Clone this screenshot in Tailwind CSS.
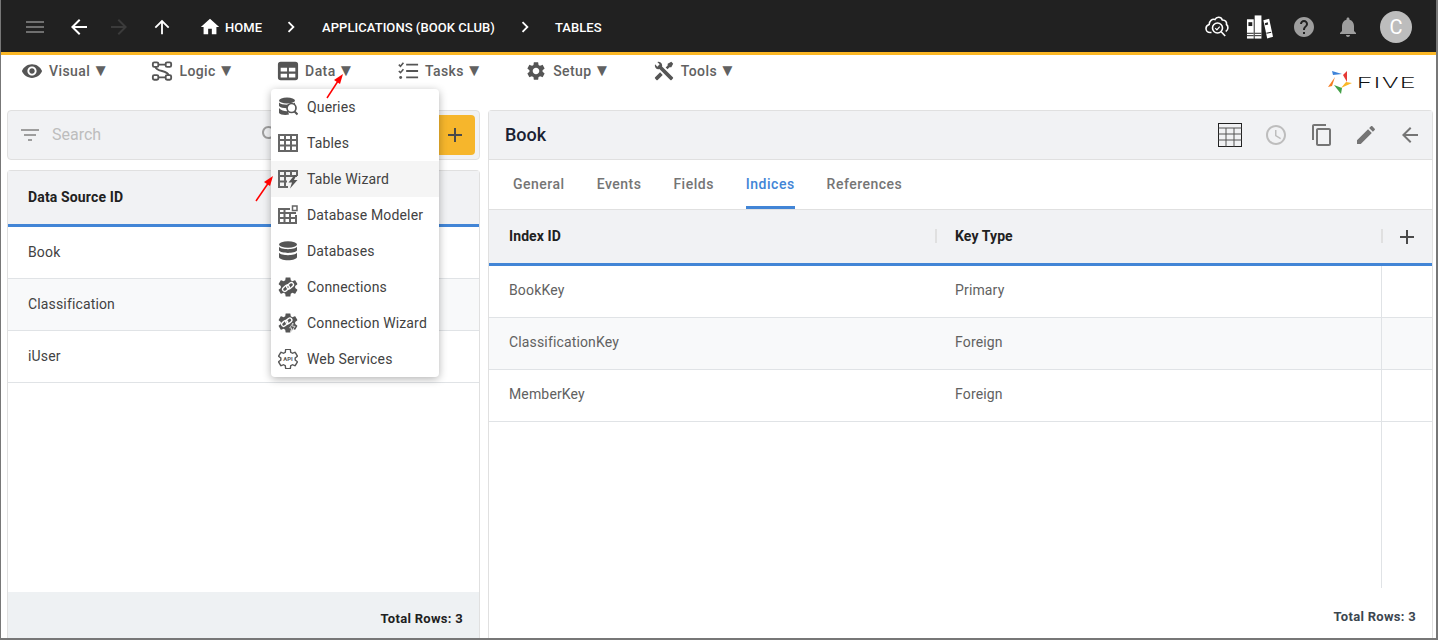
<!DOCTYPE html>
<html lang="en">
<head>
<meta charset="utf-8">
<title>Five - Tables</title>
<script src="https://cdn.jsdelivr.net/npm/@tailwindcss/browser@4"></script>
</head>
<body class="bg-white">
<div class="relative flex h-[640px] w-[1438px] flex-col overflow-hidden border-r-2 border-b-2 border-l border-[#777777] bg-white font-['Roboto',sans-serif]">

  <!-- top bar -->
  <header class="flex h-[55px] shrink-0 items-center border-b-[3px] border-[#fbb725] bg-[#212121] pt-[2px] pl-[22px] pr-[24px] text-[13px] font-medium tracking-[0.05px] text-white">
    <svg class="h-6 w-6 fill-[#6f6f6f]" viewBox="0 0 24 24"><path d="M3 18h18v-2H3v2zm0-5h18v-2H3v2zm0-7v2h18V6H3z"/></svg>
    <svg class="ml-[20px] h-6 w-6 fill-white" viewBox="0 0 24 24"><path d="M20 11H7.83l5.59-5.59L12 4l-8 8 8 8 1.41-1.41L7.83 13H20v-2z"/></svg>
    <svg class="ml-[16px] h-6 w-6 fill-[#3b3b3b]" viewBox="0 0 24 24"><path d="M12 4l-1.41 1.41L16.17 11H4v2h12.17l-5.58 5.59L12 20l8-8z"/></svg>
    <svg class="ml-[20px] h-[22px] w-[22px] fill-white" viewBox="0 0 24 24"><path d="M4 12l1.41 1.41L11 7.83V20h2V7.83l5.58 5.59L20 12l-8-8-8 8z"/></svg>
    <svg class="ml-[26px] h-[22px] w-[22px] fill-white" viewBox="0 0 24 24"><path d="M10 20v-6h4v6h5v-8h3L12 3 2 12h3v8z"/></svg>
    <span class="mt-[2px] ml-[4px]">HOME</span>
    <svg class="ml-[18px] h-[22px] w-[22px] fill-white" viewBox="0 0 24 24"><path d="M10 6L8.59 7.41 13.17 12l-4.58 4.59L10 18l6-6z"/></svg>
    <span class="mt-[2px] ml-[20px]">APPLICATIONS (BOOK CLUB)</span>
    <svg class="ml-[19px] h-[22px] w-[22px] fill-white" viewBox="0 0 24 24"><path d="M10 6L8.59 7.41 13.17 12l-4.58 4.59L10 18l6-6z"/></svg>
    <span class="mt-[2px] ml-[19px]">TABLES</span>
    <div class="ml-auto flex items-center">
      <svg class="h-6 w-6 fill-none stroke-white stroke-[1.6]" viewBox="0 0 24 24"><path d="M6.500 17.500H5C2.800 17.500 1 15.700 1 13.500c0-2 1.300-3.500 3.200-4C4.300 6 7 3.500 10 4.500c1.500-3 6-3 7.300 .5 3-.2 4.700 2.200 4.200 4.500 2 1.500 2 5.500-.8 7"/><circle cx="12.500" cy="13" r="5"/><path d="M16.200 16.800l4 4.200"/><path d="M10.300 13.200l1.600 1.600 2.800-3.200" stroke-width="1.200"/></svg>
      <svg class="ml-[17px] h-6 w-[27px]" viewBox="0 0 28 24"><g fill="#fff"><rect x="1" y="4" width="7" height="20"/><rect x="9" y="0" width="7" height="24"/><path d="M18 5l6-1.500 4 18.500-6 2z"/></g><g fill="#212121"><rect x="2.500" y="7" width="4" height="4"/><rect x="1" y="18" width="7" height="1"/><rect x="1" y="20.500" width="7" height="1"/><rect x="9" y="18" width="7" height="1"/><rect x="9" y="20.500" width="7" height="1"/><path d="M19.500 8l3-1 .5 2.500-3 .8z"/><path d="M21 18l5-1 .3 1-5 1z"/></g></svg>
      <svg class="ml-[19px] h-6 w-6 fill-[#9e9e9e]" viewBox="0 0 24 24"><path d="M12 2C6.48 2 2 6.48 2 12s4.48 10 10 10 10-4.48 10-10S17.52 2 12 2zm1 17h-2v-2h2v2zm2.070-7.750l-.9.920C13.450 12.900 13 13.500 13 15h-2v-.5c0-1.100.45-2.100 1.170-2.830l1.240-1.260c.37-.36.59-.86.59-1.410 0-1.100-.9-2-2-2s-2 .9-2 2H8c0-2.210 1.790-4 4-4s4 1.790 4 4c0 .88-.36 1.680-.93 2.250z"/></svg>
      <svg class="ml-[20px] h-6 w-6 fill-[#9e9e9e]" viewBox="0 0 24 24"><path d="M12 22c1.100 0 2-.9 2-2h-4c0 1.100.89 2 2 2zm6-6v-5c0-3.070-1.640-5.640-4.500-6.320V4c0-.83-.67-1.500-1.500-1.500s-1.500.67-1.500 1.500v.68C7.630 5.360 6 7.920 6 11v5l-2 2v1h16v-1l-2-2z"/></svg>
      <div class="ml-[20px] flex h-8 w-8 items-center justify-center rounded-full bg-[#bdbdbd] text-xl font-normal text-white">C</div>
    </div>
  </header>

  <!-- menu row -->
  <nav class="flex h-[55px] shrink-0 items-start justify-between pl-[20px] text-sm font-medium tracking-[0.4px] text-[#616161]">
    <div class="flex h-[31px] items-center gap-[42.500px]">
      <div class="flex items-center"><svg class="h-[22px] w-[22px] fill-[#555555]" viewBox="0 0 24 24"><path d="M12 4.500C7 4.500 2.730 7.610 1 12c1.730 4.390 6 7.500 11 7.500s9.270-3.110 11-7.500c-1.730-4.390-6-7.500-11-7.500zM12 17c-2.760 0-5-2.240-5-5s2.240-5 5-5 5 2.240 5 5-2.240 5-5 5zm0-8c-1.660 0-3 1.340-3 3s1.340 3 3 3 3-1.340 3-3-1.340-3-3-3z"/></svg><span class="ml-[6px]">Visual</span><span class="ml-[2px] text-[17px] leading-none tracking-normal">▼</span></div>
      <div class="flex items-center"><svg class="h-[22px] w-[22px] fill-none stroke-[#555555] stroke-2" viewBox="0 0 24 24"><rect x="2" y="2.500" width="6" height="5" rx="1.500"/><rect x="16" y="2.500" width="6" height="5" rx="1.500"/><rect x="2" y="16.500" width="6" height="5" rx="1.500"/><rect x="16" y="16.500" width="6" height="5" rx="1.500"/><path d="M8 5h8M5 7.500c0 5 14 4 14 9M8 19h8"/></svg><span class="ml-[6px]">Logic</span><span class="ml-[2px] text-[17px] leading-none tracking-normal">▼</span></div>
      <div class="flex items-center"><svg class="h-[22px] w-[22px] fill-[#555555]" viewBox="0 0 24 24"><path fill-rule="evenodd" d="M4 2h16a3 3 0 0 1 3 3v14a3 3 0 0 1-3 3H4a3 3 0 0 1-3-3V5a3 3 0 0 1 3-3zM4 8.500v4h7v-4H4zm9 0v4h7v-4h-7zm-9 6.500v4h7v-4H4zm9 0v4h7v-4h-7z"/></svg><span class="ml-[6px]">Data</span><span class="ml-[2px] text-[17px] leading-none tracking-normal">▼</span></div>
      <div class="flex items-center"><svg class="h-[22px] w-[22px] fill-none stroke-[#555555] stroke-2" viewBox="0 0 24 24"><path d="M10 5h13M10 12h13M10 19h13"/><path d="M2 5l1.800 1.800L7 3M2 12l1.800 1.800L7 10" stroke-width="1.700"/><circle cx="4" cy="19" r="1.600" fill="#555555" stroke="none"/></svg><span class="ml-[6px]">Tasks</span><span class="ml-[2px] text-[17px] leading-none tracking-normal">▼</span></div>
      <div class="flex items-center"><svg class="h-[22px] w-[22px] fill-[#555555]" viewBox="0 0 24 24"><path d="M19.140 12.940c.04-.3.06-.61.06-.94 0-.32-.02-.64-.07-.94l2.030-1.580c.18-.14.23-.41.12-.61l-1.920-3.320c-.12-.22-.37-.29-.59-.22l-2.390.96c-.5-.38-1.030-.7-1.620-.94l-.36-2.540c-.04-.24-.24-.41-.48-.41h-3.840c-.24 0-.43.17-.47.41l-.36 2.540c-.59.24-1.130.57-1.620.94l-2.390-.96c-.22-.08-.47 0-.59.22L2.740 8.870c-.12.21-.08.47.12.61l2.030 1.580c-.05.3-.09.63-.09.94s.02.64.07.94l-2.030 1.580c-.18.14-.23.41-.12.61l1.920 3.320c.12.22.37.29.59.22l2.390-.96c.5.38 1.030.7 1.620.94l.36 2.540c.05.24.24.41.48.41h3.840c.24 0 .44-.17.47-.41l.36-2.540c.59-.24 1.130-.56 1.620-.94l2.390.96c.22.08.47 0 .59-.22l1.920-3.320c.12-.22.07-.47-.12-.61l-2.010-1.580zM12 15.600c-1.980 0-3.600-1.620-3.600-3.600s1.620-3.600 3.600-3.600 3.600 1.620 3.600 3.600-1.620 3.600-3.600 3.600z"/></svg><span class="ml-[6px]">Setup</span><span class="ml-[2px] text-[17px] leading-none tracking-normal">▼</span></div>
      <div class="flex items-center"><svg class="h-[22px] w-[22px] fill-[#555555]" viewBox="0 0 24 24"><path d="M21.710 20.290L20.290 21.710A1 1 0 0 1 18.880 21.710L7 9.850A3.810 3.810 0 0 1 6 10A4 4 0 0 1 2.220 4.700L4.760 7.240L5.290 6.710L6.710 5.290L7.240 4.760L4.700 2.220A4 4 0 0 1 10 6A3.810 3.810 0 0 1 9.850 7L21.710 18.880A1 1 0 0 1 21.710 20.290M2.290 18.880A1 1 0 0 0 2.290 20.290L3.710 21.710A1 1 0 0 0 5.120 21.710L10.590 16.250L7.760 13.420M20 2L16 4V6L13.830 8.170L15.830 10.170L18 8H20L22 4Z"/></svg><span class="ml-[6px]">Tools</span><span class="ml-[2px] text-[17px] leading-none tracking-normal">▼</span></div>
    </div>
    <div class="mt-[16px] flex w-[108px] shrink-0 items-center">
      <svg class="h-6 w-6" viewBox="0 0 24 24"><path fill="#3f83d8" d="M4 0l10 3-9 1z"/><path fill="#e53935" d="M19 0l-4 4 4 7z"/><path fill="#fbb725" d="M24 12l-11 5 5-6z"/><path fill="#43a047" d="M13 23L6 14l8 3z"/><path fill="#f57c20" d="M0 16L7 6 4 15z"/></svg>
      <span class="ml-[5px] origin-left scale-x-[1.850] font-['Roboto',sans-serif] text-[14px] leading-none font-light tracking-[1px] text-[#111111]">FIVE</span>
    </div>
  </nav>

  <!-- main -->
  <main class="flex min-h-0 flex-1 gap-2 pl-[6px] pr-[3px]">
    <!-- left -->
    <section class="flex w-[473px] shrink-0 flex-col gap-[10px]">
      <div class="flex h-[50px] shrink-0 items-center rounded border border-[#e0e0e0] bg-[#f1f2f4] pl-[10px] pr-1">
        <svg class="h-6 w-6 fill-[#9e9e9e]" viewBox="0 0 24 24"><path d="M10 18h4v-2h-4v2zM3 6v2h18V6H3zm3 7h12v-2H6v2z"/></svg>
        <span class="ml-[10px] text-base text-[#bdbdbd]">Search</span>
        <svg class="ml-[158px] h-6 w-6 fill-[#9e9e9e]" viewBox="0 0 24 24"><path d="M15.500 14h-.79l-.28-.27C15.410 12.590 16 11.110 16 9.500 16 5.910 13.090 3 9.500 3S3 5.910 3 9.500 5.910 16 9.500 16c1.610 0 3.090-.59 4.230-1.570l.27.28v.79l5 4.990L20.490 19l-4.990-5zm-6 0C7.010 14 5 11.990 5 9.500S7.010 5 9.500 5 14 7.010 14 9.500 11.990 14 9.500 14z"/></svg>
        <div class="ml-auto flex h-10 w-10 items-center justify-center rounded bg-[#f6b62c]">
          <svg class="h-6 w-6 fill-[#4a4a4a]" viewBox="0 0 24 24"><path d="M19 13h-6v6h-2v-6H5v-2h6V5h2v6h6v2z"/></svg>
        </div>
      </div>
      <div class="flex min-h-0 flex-1 flex-col rounded-t border border-b-0 border-[#e0e0e0] text-sm tracking-[0.15px]">
        <div class="flex h-[56px] shrink-0 items-center border-b-[3px] border-[#4285d6] bg-[#f1f2f4] pb-[2px] pl-5 font-bold text-[#212121]">Data Source ID</div>
        <div class="flex h-[52px] shrink-0 items-center border-b border-[#e0e3e6] pb-[2px] pl-5 text-[#424242]">Book</div>
        <div class="flex h-[52px] shrink-0 items-center border-b border-[#e0e3e6] bg-[#f8f9fa] pb-[2px] pl-5 text-[#424242]">Classification</div>
        <div class="flex h-[52px] shrink-0 items-center border-b border-[#e0e3e6] pb-[2px] pl-5 text-[#424242]">iUser</div>
        <div class="mt-auto flex h-[46px] shrink-0 items-center justify-end bg-[#eef1f3] pt-2 pr-4 text-[13px] font-bold tracking-[0.3px] text-[#212121]">Total Rows: 3</div>
      </div>
    </section>
    <!-- right -->
    <section class="flex min-w-0 flex-1 flex-col rounded-t border border-b-0 border-[#e0e0e0]">
      <div class="flex h-[49px] shrink-0 items-center border-b border-[#e0e0e0] bg-[#f1f2f4] pl-4 pr-[10px]">
        <h1 class="text-lg font-medium text-[#1a2233]">Book</h1>
        <div class="ml-auto flex items-center">
          <svg class="h-6 w-6 fill-none stroke-[#222222]" viewBox="0 0 24 24"><rect x=".5" y=".5" width="23" height="23"/><path d="M.5 5h23M.5 11h23M.5 17h23M8 5v18.500M16 5v18.500" stroke="#555555"/></svg>
          <svg class="ml-[22px] h-6 w-6 fill-[#bdbdbd]" viewBox="0 0 24 24"><path d="M11.990 2C6.470 2 2 6.480 2 12s4.470 10 9.990 10C17.520 22 22 17.520 22 12S17.520 2 11.990 2zM12 20c-4.420 0-8-3.580-8-8s3.580-8 8-8 8 3.580 8 8-3.580 8-8 8zm.5-13H11v6l5.250 3.150.75-1.230-4.500-2.670z"/></svg>
          <svg class="ml-[22px] h-6 w-6 fill-[#757575]" viewBox="0 0 24 24"><path d="M16 1H4c-1.100 0-2 .9-2 2v14h2V3h12V1zm3 4H8c-1.100 0-2 .9-2 2v14c0 1.100.9 2 2 2h11c1.100 0 2-.9 2-2V7c0-1.100-.9-2-2-2zm0 16H8V7h11v14z"/></svg>
          <svg class="ml-[20px] h-6 w-6 fill-[#757575]" viewBox="0 0 24 24"><path d="M3 17.250V21h3.750L17.810 9.940l-3.750-3.750L3 17.250zM20.710 7.040c.39-.39.39-1.020 0-1.410l-2.340-2.340c-.39-.39-1.020-.39-1.410 0l-1.830 1.830 3.750 3.750 1.830-1.830z"/></svg>
          <svg class="ml-[20px] h-6 w-6 fill-[#757575]" viewBox="0 0 24 24"><path d="M20 11H7.830l5.590-5.590L12 4l-8 8 8 8 1.410-1.410L7.830 13H20v-2z"/></svg>
        </div>
      </div>
      <div class="flex h-[50px] shrink-0 items-start gap-8 border-b border-[#e0e0e0] pl-6 text-sm font-medium tracking-[0.5px] text-[#757575]">
        <div class="flex h-[49px] items-center pb-[2px]">General</div>
        <div class="flex h-[49px] items-center pb-[2px]">Events</div>
        <div class="flex h-[49px] items-center pb-[2px]">Fields</div>
        <div class="flex h-[49px] items-center rounded-b-none border-b-[3px] border-[#4285d6] pt-px text-[#4285d6]">Indices</div>
        <div class="flex h-[49px] items-center pb-[2px]">References</div>
      </div>
      <div class="grid h-[56px] shrink-0 grid-cols-[446px_446px_1fr] items-center border-b-[3px] border-[#4285d6] bg-[#f1f2f4] pb-[2px] text-sm font-bold tracking-[0.1px] text-[#212121]">
        <div class="pl-5">Index ID</div>
        <div class="flex h-[14px] items-center border-l-2 border-[#e0e0e0] pl-[18px]">Key Type</div>
        <div class="flex h-[14px] items-center justify-center border-l-2 border-[#e0e0e0] pr-[2px]">
          <svg class="mt-[3px] h-6 w-6 shrink-0 fill-[#4a4a4a]" viewBox="0 0 24 24"><path d="M19 13h-6v6h-2v-6H5v-2h6V5h2v6h6v2z"/></svg>
        </div>
      </div>
      <div class="flex min-h-0 flex-1 flex-col text-sm tracking-[0.15px] text-[#616161]">
        <div class="grid h-[52px] shrink-0 grid-cols-[446px_446px_1fr] items-center border-b border-[#e0e3e6]"><div class="pb-1 pl-5">BookKey</div><div class="pb-1 pl-5">Primary</div><div class="h-full border-l border-[#e0e3e6]"></div></div>
        <div class="grid h-[52px] shrink-0 grid-cols-[446px_446px_1fr] items-center border-b border-[#e0e3e6] bg-[#f8f9fa]"><div class="pb-1 pl-5">ClassificationKey</div><div class="pb-1 pl-5">Foreign</div><div class="h-full border-l border-[#e0e3e6]"></div></div>
        <div class="grid h-[52px] shrink-0 grid-cols-[446px_446px_1fr] items-center border-b border-[#e0e3e6]"><div class="pb-1 pl-5">MemberKey</div><div class="pb-1 pl-5">Foreign</div><div class="h-full border-l border-[#e0e3e6]"></div></div>
        <div class="grid h-[166px] shrink-0 grid-cols-[892px_1fr]"><div></div><div class="border-l border-[#e0e3e6]"></div></div>
        <div class="flex flex-1 items-center justify-end pt-2 pr-4 text-[13px] font-bold tracking-[0.3px] text-[#3c4650]">Total Rows: 3</div>
      </div>
    </section>
  </main>

  <!-- dropdown menu -->
  <div class="absolute top-[89px] left-[270px] w-[168px] rounded bg-white text-sm tracking-[0.15px] text-[#424242] shadow-[0_2px_8px_rgba(0,0,0,0.3)]">
    <div class="flex h-9 items-center pl-[7px]"><svg class="h-[20px] w-[20px]" viewBox="0 0 20 20"><g fill="#555555"><ellipse cx="9" cy="3.500" rx="8" ry="3"/><path d="M1 5.500c2 3 14 3 16 0V9c-2 3-14 3-16 0zM1 11c2 3 8 3.500 9 3l1 3.500c-3 1-9 .5-10-1.500z"/></g><circle cx="13.500" cy="11" r="4.500" fill="#fff" stroke="#555555" stroke-width="1.700"/><path d="M16.500 14.500l3 3" stroke="#555555" stroke-width="2"/></svg><span class="ml-[9px]">Queries</span></div>
    <div class="flex h-9 items-center pl-[7px]"><svg class="h-[20px] w-[20px] fill-none stroke-[#666666] stroke-2" viewBox="0 0 20 20"><rect x="1" y="2" width="18" height="16"/><path d="M1 7h18M1 12.500h18M7 2v16M13 2v16"/></svg><span class="ml-[9px]">Tables</span></div>
    <div class="flex h-9 items-center bg-[#f5f5f5] pl-[7px]"><svg class="h-[20px] w-[20px]" viewBox="0 0 20 20"><g fill="none" stroke="#666666" stroke-width="2"><path d="M10 18H1V2h18v5M1 7h18M1 12.500h8M7 2v16M13 2v5"/></g><path d="M16.500 6l-6 7.500h3.500l-2 6 7.500-8.500h-3.500l2.500-5z" fill="#555555"/></svg><span class="ml-[9px]">Table Wizard</span></div>
    <div class="flex h-9 items-center pl-[7px]"><svg class="h-[20px] w-[20px] fill-none stroke-[#666666] stroke-2" viewBox="0 0 20 20"><path d="M12 4H1v14h17v-8M1 8h17M1 13h17M6.500 4v14M12 8v10"/><rect x="14.500" y="1" width="4.500" height="4.500" stroke-width="1.500"/></svg><span class="ml-[9px]">Database Modeler</span></div>
    <div class="flex h-9 items-center pl-[7px]"><svg class="h-[20px] w-[20px] fill-[#555555]" viewBox="0 0 20 20"><ellipse cx="10" cy="3.500" rx="9" ry="3.200"/><path d="M1 5.800c2 3.200 16 3.200 18 0V9.500c-2 3.200-16 3.200-18 0zM1 11.800c2 3.200 16 3.200 18 0V16c0 1.800-4 3.200-9 3.200S1 17.800 1 16z"/></svg><span class="ml-[9px]">Databases</span></div>
    <div class="flex h-9 items-center pl-[7px]"><svg class="h-[20px] w-[20px]" viewBox="0 0 24 24"><path fill="#555555" d="M19.140 12.940c.04-.3.06-.61.06-.94 0-.32-.02-.64-.07-.94l2.030-1.580c.18-.14.23-.41.12-.61l-1.920-3.320c-.12-.22-.37-.29-.59-.22l-2.390.96c-.5-.38-1.030-.7-1.620-.94l-.36-2.540c-.04-.24-.24-.41-.48-.41h-3.840c-.24 0-.43.17-.47.41l-.36 2.540c-.59.24-1.130.57-1.620.94l-2.390-.96c-.22-.08-.47 0-.59.22L2.740 8.870c-.12.21-.08.47.12.61l2.030 1.580c-.05.3-.09.63-.09.94s.02.64.07.94l-2.030 1.580c-.18.14-.23.41-.12.61l1.920 3.320c.12.22.37.29.59.22l2.390-.96c.5.38 1.030.7 1.620.94l.36 2.540c.05.24.24.41.48.41h3.840c.24 0 .44-.17.47-.41l.36-2.540c.59-.24 1.130-.56 1.620-.94l2.390.96c.22.08.47 0 .59-.22l1.920-3.320c.12-.22.07-.47-.12-.61l-2.010-1.580z" transform="translate(-2.400 -2.400) scale(1.200)"/><g fill="none" stroke="#fff" stroke-width="1.600"><rect x="5" y="11" width="9" height="5" rx="2.500" transform="rotate(-40 9.500 13.500)"/><rect x="10" y="8" width="9" height="5" rx="2.500" transform="rotate(-40 14.500 10.500)"/></g></svg><span class="ml-[9px]">Connections</span></div>
    <div class="flex h-9 items-center pl-[7px]"><svg class="h-[20px] w-[20px]" viewBox="0 0 24 24"><path fill="#555555" d="M19.140 12.940c.04-.3.06-.61.06-.94 0-.32-.02-.64-.07-.94l2.030-1.580c.18-.14.23-.41.12-.61l-1.920-3.320c-.12-.22-.37-.29-.59-.22l-2.390.96c-.5-.38-1.030-.7-1.620-.94l-.36-2.540c-.04-.24-.24-.41-.48-.41h-3.840c-.24 0-.43.17-.47.41l-.36 2.540c-.59.24-1.130.57-1.620.94l-2.390-.96c-.22-.08-.47 0-.59.22L2.740 8.870c-.12.21-.08.47.12.61l2.030 1.580c-.05.3-.09.63-.09.94s.02.64.07.94l-2.030 1.580c-.18.14-.23.41-.12.61l1.920 3.320c.12.22.37.29.59.22l2.390-.96c.5.38 1.030.7 1.620.94l.36 2.540c.05.24.24.41.48.41h3.840c.24 0 .44-.17.47-.41l.36-2.540c.59-.24 1.130-.56 1.620-.94l2.390.96c.22.08.47 0 .59-.22l1.920-3.320c.12-.22.07-.47-.12-.61l-2.010-1.580z" transform="translate(-2.400 -2.400) scale(1.200)"/><g fill="none" stroke="#fff" stroke-width="1.600"><rect x="4" y="10" width="8" height="5" rx="2.500" transform="rotate(-40 8 12.500)"/><rect x="9" y="7" width="8" height="5" rx="2.500" transform="rotate(-40 13 9.500)"/></g><path d="M18 12l-4 6h2.500l-1 5 5-7h-3z" fill="#555555" stroke="#fff" stroke-width=".8"/></svg><span class="ml-[9px]">Connection Wizard</span></div>
    <div class="flex h-9 items-center pl-[7px]"><svg class="h-[20px] w-[20px]" viewBox="0 0 24 24"><path fill="none" stroke="#555555" stroke-width="1.400" d="M19.140 12.940c.04-.3.06-.61.06-.94 0-.32-.02-.64-.07-.94l2.030-1.580c.18-.14.23-.41.12-.61l-1.920-3.320c-.12-.22-.37-.29-.59-.22l-2.390.96c-.5-.38-1.030-.7-1.620-.94l-.36-2.540c-.04-.24-.24-.41-.48-.41h-3.840c-.24 0-.43.17-.47.41l-.36 2.540c-.59.24-1.130.57-1.620.94l-2.390-.96c-.22-.08-.47 0-.59.22L2.740 8.870c-.12.21-.08.47.12.61l2.030 1.580c-.05.3-.09.63-.09.94s.02.64.07.94l-2.030 1.580c-.18.14-.23.41-.12.61l1.920 3.320c.12.22.37.29.59.22l2.390-.96c.5.38 1.030.7 1.620.94l.36 2.540c.05.24.24.41.48.41h3.840c.24 0 .44-.17.47-.41l.36-2.540c.59-.24 1.130-.56 1.620-.94l2.390.96c.22.08.47 0 .59-.22l1.920-3.320c.12-.22.07-.47-.12-.61l-2.010-1.580z" transform="translate(-2.400 -2.400) scale(1.200)"/><text x="12" y="14.500" text-anchor="middle" font-family="Roboto" font-size="7" font-weight="700" letter-spacing="0" fill="#555555">API</text></svg><span class="ml-[9px]">Web Services</span></div>
  </div>

  <!-- annotation arrows -->
  <svg class="pointer-events-none absolute top-0 left-0 h-[640px] w-[1438px]" viewBox="0 0 1438 640">
    <g fill="#ff0000" stroke="#ff0000">
      <path d="M326 98L339 78" stroke-width="1.500"/><path d="M342 74l-9 6 6 4z" stroke="none"/>
      <path d="M255 201L268 182" stroke-width="1.500"/><path d="M272 176l-9 6 6 4z" stroke="none"/>
    </g>
  </svg>
</div>
</body>
</html>
